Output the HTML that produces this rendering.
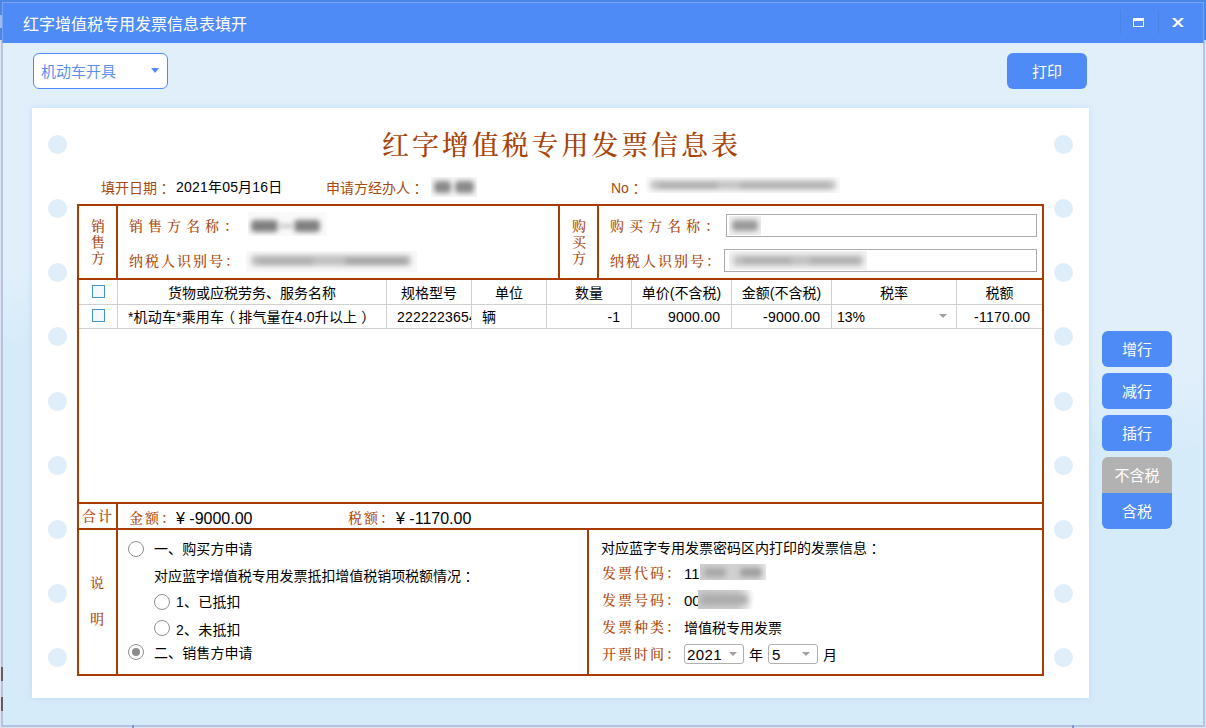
<!DOCTYPE html>
<html lang="zh-CN">
<head>
<meta charset="utf-8">
<title>红字增值税专用发票信息表填开</title>
<style>
*{box-sizing:border-box;margin:0;padding:0}
html,body{width:1206px;height:728px;overflow:hidden}
body{position:relative;background:#dfe4ee;font-family:"Liberation Sans","Noto Sans CJK SC",sans-serif;font-size:14px;color:#000}
.abs,#win>*{position:absolute}
#backtop{left:0;top:0;width:1206px;height:40px;background:#4a85e8}
#frame{left:1px;top:40px;width:1204px;height:687px;background:#b4c4e6}
#frame2{left:2px;top:2px;width:1202px;height:41px;background:#7aa3ee}
#win{position:absolute;left:3px;top:3px;width:1200px;height:722px;background:linear-gradient(185deg,#e1effb 0,#e1effb 45%,#d6ebf9 54%,#d6ebf9 100%);overflow:hidden}
#tbar{left:0;top:0;width:1200px;height:40px;background:#4f8bf6}
#ttl{left:20px;top:0;height:40px;line-height:43px;font-size:16px;color:#fff;white-space:nowrap}
.sep{top:7px;width:1px;height:24px;background:#4a82e6}
.k{font-family:"Liberation Serif","Noto Serif CJK SC",serif;color:#ab470a;white-space:nowrap;font-weight:500}
.t{white-space:nowrap}
.b{color:#a84a10}
#paper{left:29px;top:105px;width:1057px;height:590px;background:#fff;box-shadow:0 0 6px rgba(150,195,228,.42)}
.hole{width:19px;height:19px;border-radius:50%;background:#e0eefa}
.ln{background:#a83c00}
.g{background:#d0d0d0}
.btn{width:70px;height:36px;border-radius:6px;background:#4f8bf6;color:#fff;font-size:15px;text-align:center;line-height:38px}
.cb{width:13px;height:13px;border:1px solid #4492cc;background:#f6f9fc}
.rd{width:16px;height:16px;border-radius:50%;border:1px solid #8e8e8e;background:#fff}
.c{font-family:"Noto Sans CJK JP","Noto Sans CJK SC",sans-serif;position:relative;top:1px}
.bl{overflow:hidden}
.bl i{position:absolute;display:block;border-radius:4px}
.inp{border:1px solid #ababab;background:#fff}
.sel{border:1px solid #b0b0b0;border-radius:3px;background:#fff}
.tri{width:0;height:0;border-left:4px solid transparent;border-right:4px solid transparent;border-top:4px solid #a0a0a0}
</style>
</head>
<body>
<div class="abs" id="backtop"></div>
<div class="abs" id="frame"></div>
<div class="abs" style="left:0;top:15px;width:2px;height:13px;background:rgba(255,255,255,.45)"></div>
<div class="abs" id="frame2"></div>
<div class="abs" style="left:1px;top:667px;width:2px;height:14px;background:#6a5a58"></div>
<div class="abs" style="left:1px;top:697px;width:2px;height:14px;background:#6a5a58"></div>
<div class="abs" style="left:132px;top:725px;width:2px;height:3px;background:#7f97d6"></div>
<div class="abs" style="left:1072px;top:725px;width:2px;height:3px;background:#7f97d6"></div>
<div id="win">
  <div id="tbar"></div>
  <div id="ttl">红字增值税专用发票信息表填开</div>
  <div class="sep" style="left:1117px"></div>
  <div class="sep" style="left:1155px"></div>
  <svg style="left:1130px;top:15px" width="11" height="9" viewBox="0 0 11 9"><rect x="0.5" y="0.5" width="10" height="8" fill="none" stroke="#fff" stroke-width="1"/><rect x="0" y="0" width="11" height="3" fill="#fff"/></svg>
  <svg style="left:1168.5px;top:15px" width="12" height="9" viewBox="0 0 12 9"><polygon points="0,0 3,0 6,3.1 9,0 12,0 7.6,4.5 12,9 9,9 6,5.9 3,9 0,9 4.4,4.5" fill="#fff"/></svg>

  <div style="left:30px;top:50px;width:135px;height:36px;border:1px solid #4f8bf6;border-radius:6px;background:#fff"></div>
  <div class="t" style="left:38px;top:50px;line-height:38px;font-size:15px;color:#5a8ff0">机动车开具</div>
  <div class="tri" style="left:148px;top:65px;border-top-color:#4f8bf6;border-left-width:4.5px;border-right-width:4.5px;border-top-width:5.5px"></div>
  <div class="btn" style="left:1004px;top:50px;width:80px">打印</div>

  <div id="paper"></div>
  <!-- holes -->
  <div class="hole" style="left:45px;top:132px"></div>
  <div class="hole" style="left:45px;top:196px"></div>
  <div class="hole" style="left:45px;top:260px"></div>
  <div class="hole" style="left:45px;top:324px"></div>
  <div class="hole" style="left:45px;top:389px"></div>
  <div class="hole" style="left:45px;top:453px"></div>
  <div class="hole" style="left:45px;top:517px"></div>
  <div class="hole" style="left:45px;top:581px"></div>
  <div class="hole" style="left:45px;top:645px"></div>
  <div class="hole" style="left:1051px;top:132px"></div>
  <div class="hole" style="left:1051px;top:196px"></div>
  <div class="hole" style="left:1051px;top:260px"></div>
  <div class="hole" style="left:1051px;top:324px"></div>
  <div class="hole" style="left:1051px;top:389px"></div>
  <div class="hole" style="left:1051px;top:453px"></div>
  <div class="hole" style="left:1051px;top:517px"></div>
  <div class="hole" style="left:1051px;top:581px"></div>
  <div class="hole" style="left:1051px;top:645px"></div>

  <div class="k" id="ptitle" style="left:379px;top:126px;font-size:27px;line-height:34px;letter-spacing:2.9px;font-weight:500;color:#a84308">红字增值税专用发票信息表</div>

  <div class="t b" style="left:98px;top:175px;font-size:14px;line-height:18px">填开日期<span class="c" lang="ja">：</span></div>
  <div class="t" style="left:173px;top:175px;font-size:14px;line-height:18px;letter-spacing:0.2px">2021年05月16日</div>
  <div class="t b" style="left:323px;top:175px;font-size:14px;line-height:18px">申请方经办人<span class="c" lang="ja">：</span></div>
  <div class="t b" style="left:608px;top:175px;font-size:14px;line-height:18px">No<span class="c" lang="ja">：</span></div>

  <!-- frame lines -->
  <div class="ln" style="left:74px;top:201px;width:967px;height:2px"></div>
  <div class="ln" style="left:74px;top:275px;width:967px;height:2px"></div>
  <div class="ln" style="left:74px;top:499px;width:967px;height:2px"></div>
  <div class="ln" style="left:74px;top:525px;width:967px;height:2px"></div>
  <div class="ln" style="left:74px;top:671px;width:967px;height:2px"></div>
  <div class="ln" style="left:74px;top:201px;width:2px;height:472px"></div>
  <div class="ln" style="left:1039px;top:201px;width:2px;height:472px"></div>
  <div class="ln" style="left:113px;top:201px;width:2px;height:76px"></div>
  <div class="ln" style="left:555px;top:201px;width:2px;height:76px"></div>
  <div class="ln" style="left:594px;top:201px;width:2px;height:76px"></div>
  <div class="ln" style="left:113px;top:499px;width:2px;height:174px"></div>
  <div class="ln" style="left:584px;top:525px;width:2px;height:148px"></div>

  <!-- seller / buyer -->
  <div class="k" style="left:87px;top:216px;width:16px;font-size:14px;line-height:16px;white-space:normal;text-align:center">销售方</div>
  <div class="k" style="left:568px;top:216px;width:16px;font-size:14px;line-height:16px;white-space:normal;text-align:center">购买方</div>
  <div class="k" style="left:126px;top:214px;font-size:14px;line-height:20px;letter-spacing:5px">销售方名称：</div>
  <div class="k" style="left:126px;top:249px;font-size:14px;line-height:20px;letter-spacing:2px">纳税人识别号：</div>
  <div class="k" style="left:607px;top:214px;font-size:14px;line-height:20px;letter-spacing:5px">购买方名称：</div>
  <div class="k" style="left:607px;top:249px;font-size:14px;line-height:20px;letter-spacing:2px">纳税人识别号：</div>
  <div class="inp" style="left:723px;top:211px;width:311px;height:23px"></div>
  <div class="inp" style="left:721px;top:246px;width:313px;height:23px"></div>

  <!-- grid -->
  <div class="g" style="left:76px;top:301px;width:963px;height:1px"></div>
  <div class="g" style="left:76px;top:325px;width:963px;height:1px"></div>
  <div class="g" style="left:114px;top:277px;width:1px;height:49px"></div>
  <div class="g" style="left:383px;top:277px;width:1px;height:49px"></div>
  <div class="g" style="left:468px;top:277px;width:1px;height:49px"></div>
  <div class="g" style="left:543px;top:277px;width:1px;height:49px"></div>
  <div class="g" style="left:628px;top:277px;width:1px;height:49px"></div>
  <div class="g" style="left:728px;top:277px;width:1px;height:49px"></div>
  <div class="g" style="left:828px;top:277px;width:1px;height:49px"></div>
  <div class="g" style="left:953px;top:277px;width:1px;height:49px"></div>
  <div class="cb" style="left:89px;top:282px"></div>
  <div class="cb" style="left:89px;top:306px"></div>
  <div class="t h" style="left:115px;top:279px;width:268px;text-align:center;line-height:22px">货物或应税劳务、服务名称</div>
  <div class="t h" style="left:384px;top:279px;width:84px;text-align:center;line-height:22px">规格型号</div>
  <div class="t h" style="left:469px;top:279px;width:74px;text-align:center;line-height:22px">单位</div>
  <div class="t h" style="left:544px;top:279px;width:84px;text-align:center;line-height:22px">数量</div>
  <div class="t h" style="left:629px;top:279px;width:99px;text-align:center;line-height:22px">单价(不含税)</div>
  <div class="t h" style="left:729px;top:279px;width:99px;text-align:center;line-height:22px">金额(不含税)</div>
  <div class="t h" style="left:829px;top:279px;width:124px;text-align:center;line-height:22px">税率</div>
  <div class="t h" style="left:954px;top:279px;width:85px;text-align:center;line-height:22px">税额</div>

  <div class="t" style="left:125px;top:303px;line-height:22px;letter-spacing:0.15px">*机动车*乘用车<span style="margin-left:-3px;margin-right:3px">（</span>排气量在4.0升以上<span style="margin-left:4px">）</span></div>
  <div class="t" style="left:394px;top:303px;width:74px;overflow:hidden;line-height:22px;letter-spacing:0.2px">2222223654</div>
  <div class="t" style="left:479px;top:303px;line-height:22px">辆</div>
  <div class="t" style="left:544px;top:303px;width:73px;text-align:right;line-height:22px">-1</div>
  <div class="t" style="left:629px;top:303px;width:88.25px;text-align:right;line-height:22px;letter-spacing:0.25px">9000.00</div>
  <div class="t" style="left:729px;top:303px;width:88.25px;text-align:right;line-height:22px;letter-spacing:0.25px">-9000.00</div>
  <div class="t" style="left:834px;top:303px;line-height:22px">13%</div>
  <div class="tri" style="left:936px;top:311px"></div>
  <div class="t" style="left:954px;top:303px;width:73.25px;text-align:right;line-height:22px;letter-spacing:0.25px">-1170.00</div>

  <!-- total -->
  <div class="k" style="left:79px;top:504px;font-size:14px;line-height:20px;letter-spacing:2px">合计</div>
  <div class="k" style="left:126px;top:506px;font-size:14px;line-height:20px;letter-spacing:2px">金额：</div>
  <div class="t" style="left:173px;top:506px;font-size:16px;line-height:20px">¥ -9000.00</div>
  <div class="k" style="left:345px;top:506px;font-size:14px;line-height:20px;letter-spacing:2px">税额：</div>
  <div class="t" style="left:393px;top:506px;font-size:16px;line-height:20px">¥ -1170.00</div>

  <!-- notes -->
  <div class="k" style="left:87px;top:571px;font-size:14px;line-height:20px">说</div>
  <div class="k" style="left:87px;top:607px;font-size:14px;line-height:20px">明</div>
  <div class="rd" style="left:125px;top:538px"></div>
  <div class="t" style="left:151px;top:536px;line-height:20px;letter-spacing:0.1px">一、购买方申请</div>
  <div class="t" style="left:151px;top:562px;line-height:20px;letter-spacing:-0.05px">对应蓝字增值税专用发票抵扣增值税销项税额情况<span class="c" lang="ja">：</span></div>
  <div class="rd" style="left:151px;top:591px"></div>
  <div class="t" style="left:173px;top:589px;line-height:20px;letter-spacing:0.2px">1、已抵扣</div>
  <div class="rd" style="left:151px;top:617px"></div>
  <div class="t" style="left:173px;top:617px;line-height:20px;letter-spacing:0.2px">2、未抵扣</div>
  <div class="rd" style="left:125px;top:641px"></div>
  <div style="left:129px;top:645px;width:8px;height:8px;border-radius:50%;background:#8c8c8c"></div>
  <div class="t" style="left:151px;top:640px;line-height:20px;letter-spacing:0.1px">二、销售方申请</div>

  <div class="t" style="left:598px;top:534px;font-size:14px;line-height:20px">对应蓝字专用发票密码区内打印的发票信息<span class="c" lang="ja">：</span></div>
  <div class="k" style="left:599px;top:561px;font-size:14px;line-height:20px;letter-spacing:2px">发票代码：</div>
  <div class="k" style="left:599px;top:588px;font-size:14px;line-height:20px;letter-spacing:2px">发票号码：</div>
  <div class="k" style="left:599px;top:615px;font-size:14px;line-height:20px;letter-spacing:2px">发票种类：</div>
  <div class="k" style="left:599px;top:642px;font-size:14px;line-height:20px;letter-spacing:2px">开票时间：</div>
  <div class="t" style="left:681px;top:561px;font-size:15px;line-height:20px">11</div>
  <div class="t" style="left:681px;top:588px;font-size:15px;line-height:20px">00</div>
  <div class="t" style="left:681px;top:615px;font-size:14px;line-height:20px">增值税专用发票</div>
  <div class="sel" style="left:681px;top:641px;width:60px;height:20px"></div>
  <div class="t" style="left:684px;top:642px;font-size:15px;line-height:20px;letter-spacing:0.4px">2021</div>
  <div class="tri" style="left:726px;top:649px"></div>
  <div class="t" style="left:746px;top:642px;font-size:14px;line-height:20px">年</div>
  <div class="sel" style="left:765px;top:641px;width:50px;height:20px"></div>
  <div class="t" style="left:769px;top:642px;font-size:15px;line-height:20px">5</div>
  <div class="tri" style="left:799px;top:649px"></div>
  <div class="t" style="left:820px;top:642px;font-size:14px;line-height:20px">月</div>


  <!-- redacted values (blurred in source) -->
  <div class="bl" style="left:245px;top:209px;width:79px;height:24px;background:#fafafa"><i style="left:3px;top:8px;width:27px;height:12px;background:#808080;filter:blur(2.5px)"></i><i style="left:46px;top:8px;width:26px;height:12px;background:#808080;filter:blur(2.5px)"></i><i style="left:30px;top:12px;width:16px;height:4px;background:#c8c8c8;filter:blur(2px)"></i></div>
  <div class="bl" style="left:243px;top:248px;width:171px;height:21px;background:#f8f8f8"><i style="left:5px;top:4px;width:160px;height:11px;background:#c2c2c2;filter:blur(2.5px)"></i><i style="left:99px;top:8px;width:62px;height:4px;background:#9a9a9a;filter:blur(2.5px)"></i><i style="left:12px;top:8px;width:55px;height:4px;background:#a8a8a8;filter:blur(2.5px)"></i></div>
  <div class="bl" style="left:428px;top:174px;width:46px;height:20px;background:#f6f6f6"><i style="left:3px;top:4px;width:17px;height:12px;background:#8a8a8a;filter:blur(2.5px)"></i><i style="left:24px;top:4px;width:19px;height:12px;background:#8a8a8a;filter:blur(2.5px)"></i></div>
  <div class="bl" style="left:643px;top:174px;width:194px;height:16px;background:#fafafa"><i style="left:4px;top:3px;width:186px;height:10px;background:#c6c6c6;filter:blur(2.5px)"></i><i style="left:12px;top:7px;width:60px;height:3px;background:#a0a0a0;filter:blur(2.5px)"></i><i style="left:94px;top:7px;width:90px;height:3px;background:#a6a6a6;filter:blur(2.5px)"></i></div>
  <div class="bl" style="left:726px;top:213px;width:32px;height:19px;background:#f0f0f0"><i style="left:3px;top:4px;width:26px;height:11px;background:#9a9a9a;filter:blur(2.5px)"></i></div>
  <div class="bl" style="left:726px;top:248px;width:138px;height:19px;background:#f2f2f2"><i style="left:4px;top:4px;width:130px;height:11px;background:#c4c4c4;filter:blur(2.5px)"></i><i style="left:13px;top:8px;width:50px;height:3px;background:#a0a0a0;filter:blur(2.5px)"></i><i style="left:81px;top:8px;width:50px;height:3px;background:#a0a0a0;filter:blur(2.5px)"></i></div>
  <div class="bl" style="left:697px;top:561px;width:66px;height:16px;background:linear-gradient(90deg,#cfcfcf 0,#d2d2d2 85%,#e6e6e6 100%)"><i style="left:4px;top:4px;width:22px;height:9px;background:#a8a8a8;filter:blur(2.5px)"></i><i style="left:40px;top:4px;width:22px;height:9px;background:#a0a0a0;filter:blur(2.5px)"></i></div>
  <div class="bl" style="left:695px;top:587px;width:56px;height:19px;background:linear-gradient(90deg,#cacaca 0,#d0d0d0 70%,#fff 100%)"><i style="left:2px;top:4px;width:48px;height:11px;background:#aaaaaa;filter:blur(3px)"></i></div>
  <!-- right buttons -->
  <div class="btn" style="left:1099px;top:328px">增行</div>
  <div class="btn" style="left:1099px;top:370px">减行</div>
  <div class="btn" style="left:1099px;top:412px">插行</div>
  <div class="btn" style="left:1099px;top:454px;background:#b2b2b2;border-radius:6px 6px 0 0">不含税</div>
  <div class="btn" style="left:1099px;top:490px;border-radius:0 0 6px 6px;height:36px;line-height:37px">含税</div>
</div>
</body>
</html>
